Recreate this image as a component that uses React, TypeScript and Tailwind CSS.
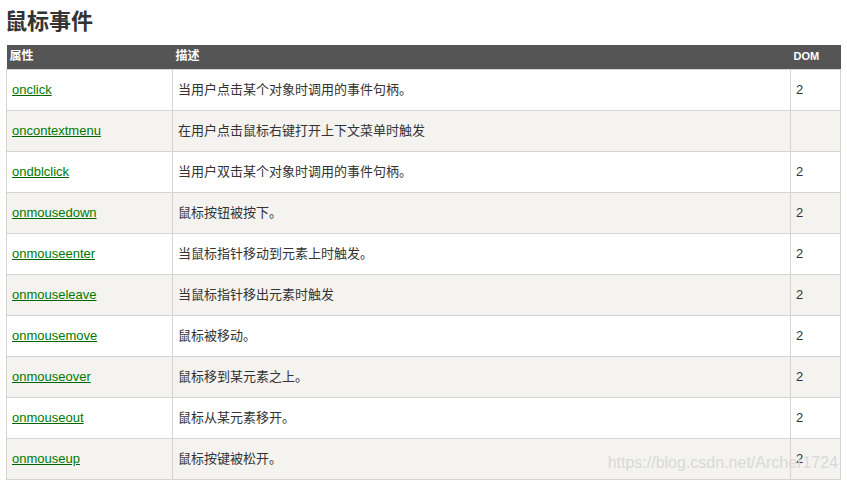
import React from 'react';

const rows: { name: string; desc: string; dom: string }[] = [
  { name: 'onclick', desc: '当用户点击某个对象时调用的事件句柄。', dom: '2' },
  { name: 'oncontextmenu', desc: '在用户点击鼠标右键打开上下文菜单时触发', dom: '' },
  { name: 'ondblclick', desc: '当用户双击某个对象时调用的事件句柄。', dom: '2' },
  { name: 'onmousedown', desc: '鼠标按钮被按下。', dom: '2' },
  { name: 'onmouseenter', desc: '当鼠标指针移动到元素上时触发。', dom: '2' },
  { name: 'onmouseleave', desc: '当鼠标指针移出元素时触发', dom: '2' },
  { name: 'onmousemove', desc: '鼠标被移动。', dom: '2' },
  { name: 'onmouseover', desc: '鼠标移到某元素之上。', dom: '2' },
  { name: 'onmouseout', desc: '鼠标从某元素移开。', dom: '2' },
  { name: 'onmouseup', desc: '鼠标按键被松开。', dom: '2' },
];

export default function App() {
  return (
    <div
      className="w-[847px] h-[481px] bg-white pl-[6px] pt-[8px] overflow-hidden"
      style={{ fontFamily: '"Liberation Sans", "Noto Sans CJK SC", sans-serif' }}
    >
      <h2 className="text-[22px] leading-[28px] font-bold text-[#333] mb-[9px] -ml-[1px]">鼠标事件</h2>

      <div className="relative w-[834px]">
        <table className="w-[834px] border-collapse table-fixed text-[13px] text-[#333]">
          <colgroup>
            <col className="w-[166px]" />
            <col className="w-[618px]" />
            <col className="w-[50px]" />
          </colgroup>
          <thead>
            <tr className="bg-[#555] h-[24px]">
              <th className="text-left align-top text-white font-bold text-[12px] px-[3px] pt-[3px] leading-[16px]">属性</th>
              <th className="text-left align-top text-white font-bold text-[12px] px-[3px] pt-[3px] leading-[16px]">描述</th>
              <th className="text-left align-top text-white font-bold text-[11px] px-[3px] pt-[3px] leading-[16px]">DOM</th>
            </tr>
          </thead>
          <tbody>
            {rows.map((r, i) => (
              <tr key={r.name} className={`h-[41px] ${i % 2 === 1 ? 'bg-[#f4f3f0]' : 'bg-white'}`}>
                <td className="border border-[#d4d4d4] px-[5px] align-middle">
                  <a href="#" className="text-[#007a00] underline decoration-[#006400]">{r.name}</a>
                </td>
                <td className="border border-[#d4d4d4] px-[5px] align-middle">{r.desc}</td>
                <td className="border border-[#d4d4d4] px-[5px] align-middle">{r.dom}</td>
              </tr>
            ))}
          </tbody>
        </table>

        {/* watermark */}
        <span className="absolute right-[2px] bottom-[8px] text-[16px] leading-[18px] text-[#d9d9d9] pointer-events-none">
          https://blog.csdn.net/Archer1724
        </span>
      </div>
    </div>
  );
}
